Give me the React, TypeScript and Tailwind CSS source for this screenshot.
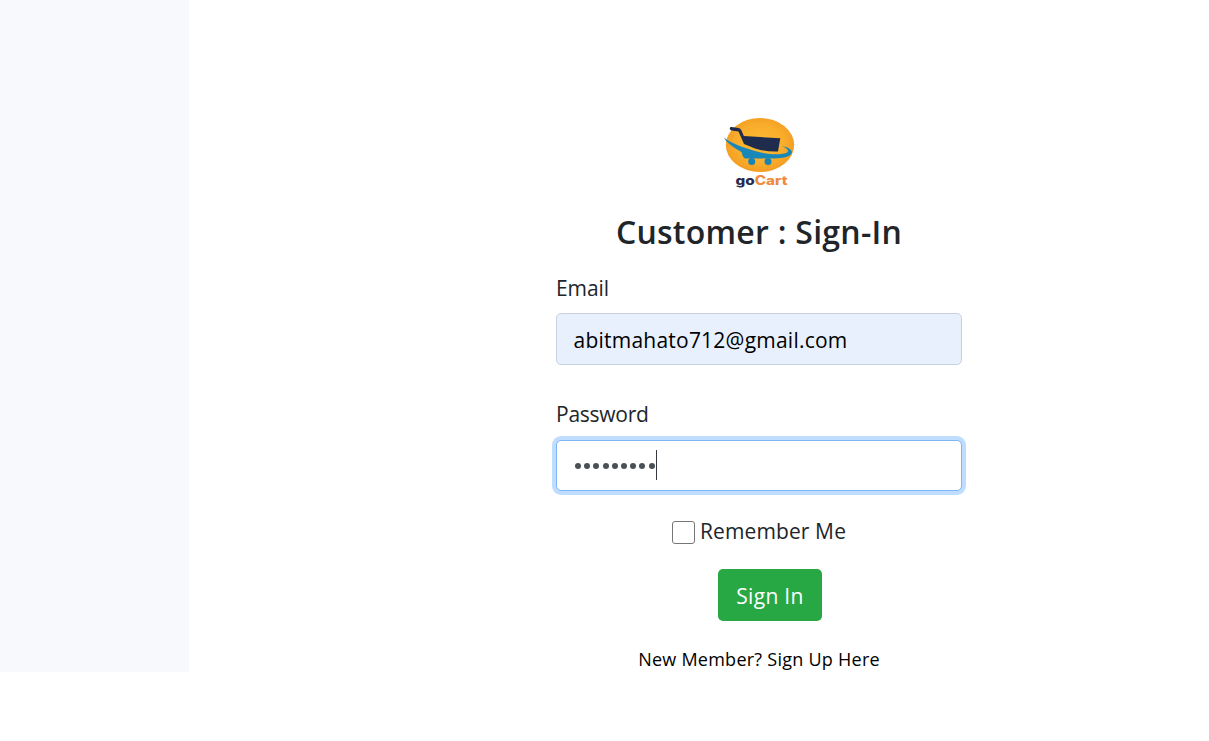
import React from "react";

function Logo() {
  return (
    <svg width="76" height="76" viewBox="0 0 76 76" aria-label="goCart">
      <defs>
        <radialGradient id="sun" cx="50%" cy="48%" r="55%">
          <stop offset="0" stopColor="#fdbb35" />
          <stop offset="0.65" stopColor="#f9ad2b" />
          <stop offset="1" stopColor="#f39a22" />
        </radialGradient>
      </defs>
      <ellipse cx="39" cy="30" rx="34.200" ry="27" fill="url(#sun)" />
      <path
        d="M8.800 13 Q9 11.800 10.500 12 L17.500 13 Q19.500 13.300 20.500 15.500 L22.800 21 L59.300 23.300 L57 36.500 Q45 37 34 33.500 L23 29 L17.500 16.500 L10.500 15.600 Q8.500 15 8.800 13Z"
        fill="#1f2c4d"
      />
      <path
        d="M2.800 22.500 C13 30 26 34 39 37.200 C53 40.500 66 39.500 67 36.500 C67.500 34.500 64.500 32.500 60 31 C67 32 71.500 34.500 70.800 38 C69 43 55 44 45 43.500 L24.500 43.500 C22 43 21.500 40 20.500 37 C12 32 6 28 2.800 22.500Z"
        fill="#1987b8"
      />
      <circle cx="30.700" cy="46.500" r="3.500" fill="#1784b5" />
      <circle cx="47" cy="46.500" r="3.500" fill="#1784b5" />
      <text
        x="14.500"
        y="69.500"
        fontFamily="Inter, sans-serif"
        fontWeight="800"
        fontSize="12.500"
        textLength="52"
        lengthAdjust="spacingAndGlyphs"
        fill="#252b50"
      >
        go<tspan fill="#f08a3c">Cart</tspan>
      </text>
    </svg>
  );
}

export default function App() {
  return (
    <div className="flex h-[741px] w-[1209px] overflow-hidden bg-white font-['Open_Sans',sans-serif] text-[#212529]">
      <aside className="h-[672px] w-[189px] shrink-0 bg-[#f8f9fc]" />
      <main className="flex flex-1 justify-center pt-[115px] pl-[120px]">
        <form className="flex h-fit w-[406px] flex-col items-center">
          <Logo />
          <h1 className="mt-[21px] h-10 text-[32px] leading-10 font-[580] tracking-[0.26px] whitespace-nowrap">
            Customer : Sign-In
          </h1>
          <label className="mt-5 h-8 w-full text-[21px] leading-8 tracking-[-0.1px]">Email</label>
          <div className="mt-[9px] flex h-[52px] w-full items-center rounded-[5px] border border-[#c9d1df] bg-[#e8f0fe] px-[16.500px] pt-0.5 text-[21px] leading-8 tracking-[0.23px] text-black">
            abitmahato712@gmail.com
          </div>
          <label className="mt-[33px] h-8 w-full text-[21px] leading-8 tracking-[-0.25px]">Password</label>
          <div className="mt-[10px] flex h-[51px] w-full items-center rounded-[5px] border border-[#80b5f5] bg-white pl-[18px] shadow-[0_0_0_4px_#bfdeff]">
            <div className="flex gap-[3.200px] pt-[1px]">
              {Array.from({ length: 9 }, (_, i) => (
                <span key={i} className="size-[6px] rounded-full bg-[#495057]" />
              ))}
            </div>
            <span className="mb-[2px] ml-[1px] h-[30px] w-px bg-[#343a40]" />
          </div>
          <label className="mt-[24px] flex h-8 items-center text-[21px] leading-8">
            <span className="mt-[3px] mr-[5px] size-[23px] rounded-[3px] border border-[#767676] bg-white" />
            <span className="tracking-[0.12px]">Remember Me</span>
          </label>
          <button
            type="button"
            className="mt-[22px] ml-[22px] h-[52px] w-[104px] rounded-[5px] bg-[#28a745] pt-0.5 text-[21px] leading-8 tracking-[0.3px] whitespace-nowrap text-white"
          >
            Sign In
          </button>
          <a className="mt-[24px] h-7 text-[18px] leading-7 tracking-[0.25px] whitespace-nowrap text-black">
            New Member? Sign Up Here
          </a>
        </form>
      </main>
    </div>
  );
}
